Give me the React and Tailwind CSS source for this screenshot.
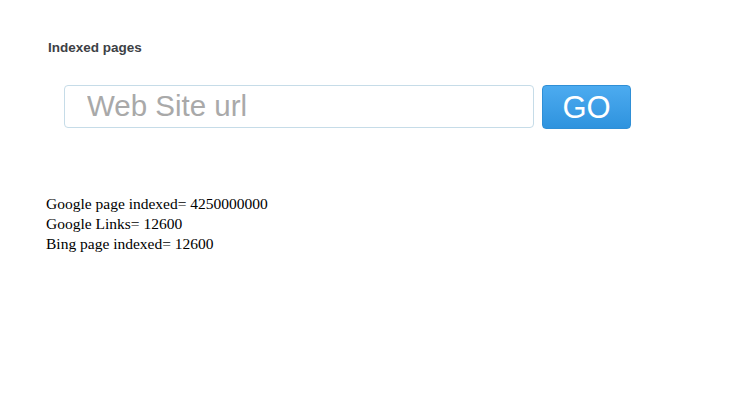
import React from 'react';

const stats = [
    ['Google page indexed', '4250000000'],
    ['Google Links', '12600'],
    ['Bing page indexed', '12600'],
];

const App = () => {
    return (
        <div className="min-h-screen bg-white">
            {/* Header */}
            <div className="pt-[40px] pl-[48px]">
                <h2 className="text-[13.5px] font-bold text-[#3d4145] font-['Liberation_Sans',Arial,sans-serif] leading-[16px]">
                    Indexed pages
                </h2>
            </div>

            {/* Search row */}
            <form className="flex items-start gap-[8px] pl-[64px] mt-[29px]" onSubmit={(e) => e.preventDefault()}>
                <input
                    type="text"
                    placeholder="Web Site url"
                    className="w-[470px] h-[43px] px-[22px] border border-[#c6dce8] rounded-[4px] bg-white text-[29.5px] text-[#555] placeholder-[#a9a9a9] font-['Liberation_Sans',Arial,sans-serif] focus:outline-none"
                />
                <button
                    type="submit"
                    className="w-[89px] h-[44px] rounded-[4px] bg-gradient-to-b from-[#4cabf0] to-[#2e93de] border border-[#2f8fd6] text-white text-[31px] leading-none font-['Liberation_Sans',Arial,sans-serif]"
                >
                    GO
                </button>
            </form>

            {/* Results */}
            <div className="pl-[46px] mt-[65px] text-[15.5px] leading-[20px] text-black font-['Liberation_Serif','Times_New_Roman',serif]">
                {stats.map(([label, value]) => (
                    <div key={label}>{label}= {value}</div>
                ))}
            </div>
        </div>
    );
};

export default App;
